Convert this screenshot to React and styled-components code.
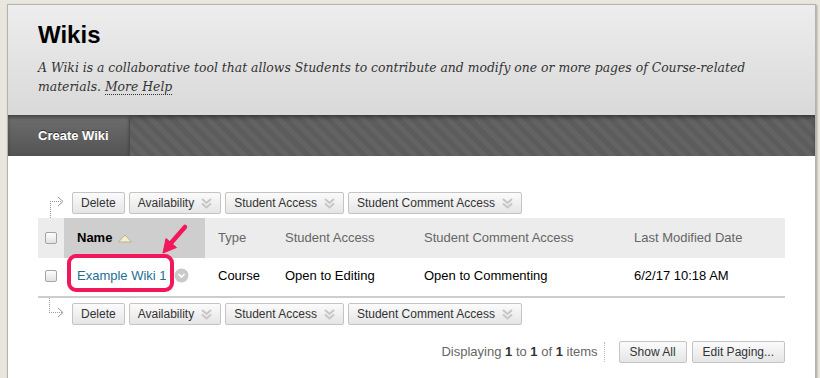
import React from 'react';
import styled, { createGlobalStyle } from 'styled-components';

const GlobalStyle = createGlobalStyle`
  html, body {
    margin: 0;
    padding: 0;
  }
  body {
    background-color: #e9e6de;
    font-family: Arial, "Liberation Sans", sans-serif;
  }
`;

const Page = styled.div`
  padding: 4px 0 0 7px;
`;

const Panel = styled.div`
  width: 809px;
  min-height: 380px;
  box-sizing: border-box;
  background: #fff;
  border: 1px solid #b3b3b3;
  border-bottom: none;
  box-shadow: 1px 1px 2px rgba(0, 0, 0, 0.3);
`;

const PageHeader = styled.div`
  height: 110px;
  box-sizing: border-box;
  padding: 16px 30px 0 30px;
  background: linear-gradient(#ededed, #d9d9d9);
`;

const Title = styled.h1`
  margin: 0;
  font-family: Arial, "Liberation Sans", sans-serif;
  font-size: 24px;
  line-height: 28px;
  font-weight: bold;
  color: #000;
`;

const Description = styled.p`
  margin: 9px 0 0;
  font-family: "DejaVu Serif", serif;
  font-style: italic;
  font-size: 12.4px;
  line-height: 19px;
  color: #333;
`;

const HelpLink = styled.a`
  color: #333;
  text-decoration: none;
  border-bottom: 1px dotted #333;
`;

const ActionBar = styled.div`
  display: flex;
  height: 41px;
  background-color: #5c5c5c;
  background-image: repeating-linear-gradient(
    45deg,
    #5c5c5c 0px,
    #5c5c5c 5px,
    #636363 5px,
    #636363 10px
  );
  box-shadow: inset 0 3px 4px -1px rgba(0, 0, 0, 0.45);
`;

const ActionButton = styled.div`
  display: flex;
  align-items: center;
  width: 122px;
  box-sizing: border-box;
  padding-left: 30px;
  background: linear-gradient(#6e6e6e, #535353);
  border-right: 1px solid #4a4a4a;
  box-shadow: inset 0 3px 4px -1px rgba(0, 0, 0, 0.45);
  color: #fff;
  font-size: 13px;
  font-weight: bold;
  text-shadow: 0 -1px 0 rgba(0, 0, 0, 0.5);
`;

const Content = styled.div`
  padding: 36px 30px 20px;
`;

const Toolbar = styled.div`
  display: flex;
  align-items: center;
  gap: 4px;
  margin-top: ${(p) => p.$top || 0}px;
`;

const Connector = styled.svg`
  flex: none;
  width: 30px;
  height: 22px;
  overflow: visible;
`;

const Button = styled.button`
  display: flex;
  align-items: center;
  gap: 7px;
  height: 22px;
  box-sizing: border-box;
  padding: 0 ${(p) => (p.$wide ? 10 : 8)}px;
  border: 1px solid #c4c4c4;
  border-radius: 2px;
  background: linear-gradient(#fbfbfb, #e5e5e5);
  color: #333;
  font-family: Arial, "Liberation Sans", sans-serif;
  font-size: 12px;
  white-space: nowrap;
`;

const TableWrap = styled.div`
  position: relative;
  margin-top: 4px;
`;

const Row = styled.div`
  display: grid;
  grid-template-columns: 26px 141px 67px 139px 210px 1fr;
  align-items: stretch;
  height: ${(p) => (p.$head ? 40 : 38)}px;
  background: ${(p) => (p.$head ? '#ececec' : '#fff')};
  border-bottom: ${(p) => (p.$head ? 'none' : '2px solid #cdcdcd')};
`;

const Cell = styled.div`
  display: flex;
  align-items: center;
  padding-left: ${(p) => (p.$check ? 7 : 13)}px;
  padding-bottom: ${(p) => (p.$head ? 1 : 3)}px;
  background: ${(p) => (p.$sorted ? '#cecece' : 'transparent')};
  font-size: 13px;
  color: ${(p) => (p.$bold ? '#000' : p.$head ? '#666' : '#000')};
  font-weight: ${(p) => (p.$bold ? 'bold' : 'normal')};
  white-space: nowrap;
`;

const Checkbox = styled.span`
  display: inline-block;
  width: 12px;
  height: 12px;
  box-sizing: border-box;
  border: 1px solid #a4a4a4;
  border-radius: 2px;
  background: linear-gradient(#fdfdfd, #e2e2e2);
`;

const ItemLink = styled.a`
  color: #1c6f93;
  text-decoration: none;
`;

const MenuCircle = styled.svg`
  margin-left: 7px;
  flex: none;
`;

const Highlight = styled.div`
  position: absolute;
  left: 29px;
  top: 36px;
  width: 107px;
  height: 38px;
  box-sizing: border-box;
  border: 4px solid #f2175b;
  border-radius: 9px;
  pointer-events: none;
`;

const Pointer = styled.svg`
  position: absolute;
  left: 0;
  top: 0;
  overflow: visible;
  pointer-events: none;
`;

const Paging = styled.div`
  display: flex;
  justify-content: flex-end;
  align-items: center;
  margin-top: 16px;
`;

const PagingText = styled.span`
  font-size: 13px;
  color: #666;
  padding-right: 6px;
  border-right: 1px dotted #bbb;
  line-height: 20px;
  margin-right: 14px;

  b {
    color: #333;
    font-weight: bold;
  }
`;

const PagingButtons = styled.div`
  display: flex;
  gap: 5px;
`;

const Chevrons = () => (
  <svg width="11" height="11" viewBox="0 0 11 11">
    <polyline points="1,1 5.5,5 10,1" fill="none" stroke="#c6c6c6" strokeWidth="2" />
    <polyline points="1,5.5 5.5,9.5 10,5.5" fill="none" stroke="#c6c6c6" strokeWidth="2" />
  </svg>
);

const Link = ({ down }) => (
  <Connector>
    <g stroke="#9a9a9a" strokeWidth="1" strokeDasharray="1 1" fill="none">
      {down ? <line x1="12.5" y1="9" x2="12.5" y2="26" /> : <line x1="11.5" y1="-5" x2="11.5" y2="10" />}
      <line x1={down ? 12 : 11} y1="9.5" x2="24" y2="9.5" />
    </g>
    <polyline points="20,5 25,9.5 20,14" fill="none" stroke="#9a9a9a" strokeWidth="1" />
  </Connector>
);

const ActionsRow = ({ down, top }) => (
  <Toolbar $top={top}>
    <Link down={down} />
    <Button>Delete</Button>
    <Button>
      Availability <Chevrons />
    </Button>
    <Button>
      Student Access <Chevrons />
    </Button>
    <Button>
      Student Comment Access <Chevrons />
    </Button>
  </Toolbar>
);

const App = () => {
  return (
    <Page>
      <GlobalStyle />
      <Panel>
        <PageHeader>
          <Title>Wikis</Title>
          <Description>
            A Wiki is a collaborative tool that allows Students to contribute and modify one or more pages of
            Course-related materials. <HelpLink>More Help</HelpLink>
          </Description>
        </PageHeader>
        <ActionBar>
          <ActionButton>Create Wiki</ActionButton>
        </ActionBar>
        <Content>
          <ActionsRow down />
          <TableWrap>
            <Row $head>
              <Cell $check $head>
                <Checkbox />
              </Cell>
              <Cell $head $sorted $bold>
                Name
                <svg width="16" height="10" viewBox="0 0 16 10" style={{ marginLeft: 5 }}>
                  <polygon points="1.5,9 8,2 14.5,9" fill="#f6eec4" stroke="#b5b09a" strokeWidth="1" />
                </svg>
              </Cell>
              <Cell $head>Type</Cell>
              <Cell $head>Student Access</Cell>
              <Cell $head>Student Comment Access</Cell>
              <Cell $head>Last Modified Date</Cell>
            </Row>
            <Row>
              <Cell $check>
                <Checkbox />
              </Cell>
              <Cell>
                <ItemLink>Example Wiki 1</ItemLink>
                <MenuCircle width="15" height="15" viewBox="0 0 15 15">
                  <circle cx="7.5" cy="7.5" r="7" fill="#c9c9c9" />
                  <polyline points="4.5,6 7.5,9 10.5,6" fill="none" stroke="#fff" strokeWidth="1.6" />
                </MenuCircle>
              </Cell>
              <Cell>Course</Cell>
              <Cell>Open to Editing</Cell>
              <Cell>Open to Commenting</Cell>
              <Cell>6/2/17 10:18 AM</Cell>
            </Row>
            <Highlight />
            <Pointer width="200" height="60" viewBox="0 0 200 60">
              <line x1="147" y1="9" x2="133" y2="25" stroke="#f2175b" strokeWidth="4.5" strokeLinecap="round" />
              <polygon points="125,35 138.5,29.5 128,20.5" fill="#f2175b" stroke="#f2175b" strokeWidth="1" strokeLinejoin="round" />
            </Pointer>
          </TableWrap>
          <ActionsRow top={5} />
          <Paging>
            <PagingText>
              Displaying <b>1</b> to <b>1</b> of <b>1</b> items
            </PagingText>
            <PagingButtons>
              <Button $wide>Show All</Button>
              <Button $wide>Edit Paging...</Button>
            </PagingButtons>
          </Paging>
        </Content>
      </Panel>
    </Page>
  );
};

export default App;
